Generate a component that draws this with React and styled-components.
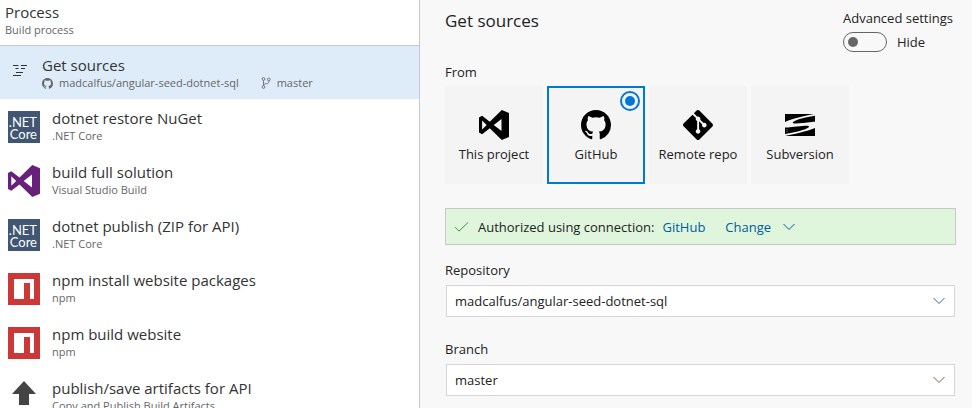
import React, { useState } from "react";
import styled, { createGlobalStyle } from "styled-components";
import { SiGit, SiSubversion } from "react-icons/si";

const GlobalStyle = createGlobalStyle`
  *, *::before, *::after { box-sizing: border-box; }
  body {
    margin: 0;
    color: #222;
    background: #f8f8f8;
    font-family: "Segoe UI", "Open Sans", "Noto Sans", sans-serif;
    font-size: 13px;
    line-height: 20px;
  }
  button, select, input { font: inherit; color: inherit; margin: 0; }
  svg { display: block; flex: none; }
`;

const Page = styled.div`
  display: grid;
  grid-template-columns: minmax(0, 420fr) minmax(0, 552fr);
  height: 100vh;
`;

const Sidebar = styled.nav`
  overflow: hidden;
  background: #fff;
  border-right: 1px solid #c8c8c8;
`;

const StepTitle = styled.span`
  display: block;
  font-size: 15px;
  line-height: 20px;
  color: #333;
`;

const StepCaption = styled.span`
  display: flex;
  align-items: center;
  font-size: 11px;
  line-height: 16px;
  color: #666;
`;

const ProcessHeader = styled.button`
  display: flex;
  flex-direction: column;
  width: 100%;
  height: 46px;
  padding: 2px 5px 0;
  border: 0;
  border-bottom: 1px solid #c8c8c8;
  background: none;
  text-align: left;
`;

const SourceStep = styled.button`
  display: flex;
  gap: 14px;
  width: 100%;
  height: 53px;
  padding: 9px 12px 0;
  border: 0;
  background: #deecf9;
  text-align: left;
`;

const SourceIcon = styled.span`
  padding-top: 8px;
`;

const SourceMeta = styled.span`
  display: flex;
  align-items: center;
  gap: 6px;
  margin-right: 22px;
`;

const StepList = styled.ul`
  margin: 0;
  padding: 1px 0 0;
  list-style: none;
`;

const StepButton = styled.button`
  display: flex;
  gap: 12px;
  width: 100%;
  height: 54px;
  padding: 8px 8px 0;
  border: 0;
  background: none;
  text-align: left;
`;

const StepIcon = styled.span`
  width: 32px;
  padding-top: 3px;
`;

const DotnetTile = styled.span`
  display: flex;
  flex-direction: column;
  align-items: flex-end;
  height: 32px;
  padding: 5px 3px 0 0;
  background: #405672;
  color: #fff;
  font-family: Lato, sans-serif;
  font-size: 13px;
  line-height: 12px;
`;

const Details = styled.main`
  padding: 9px 16px 0 25px;
  overflow: hidden;
`;

const DetailsHeader = styled.header`
  display: flex;
  justify-content: space-between;
  height: 53px;
`;

const Heading = styled.h1`
  margin: 0;
  font-size: 17px;
  line-height: 24px;
  font-weight: 400;
`;

const Advanced = styled.div`
  width: 113px;
  line-height: 18px;
`;

const ToggleRow = styled.label`
  display: flex;
  align-items: center;
  gap: 10px;
  padding-top: 5px;
`;

const Toggle = styled.input`
  appearance: none;
  display: flex;
  align-items: center;
  width: 44px;
  height: 20px;
  padding: 0 4px;
  border: 1px solid #666;
  border-radius: 10px;
  justify-content: ${(p) => (p.checked ? "flex-end" : "flex-start")};
  &::before {
    content: "";
    width: 10px;
    height: 10px;
    border-radius: 50%;
    background: #666;
  }
`;

const SourceGroup = styled.fieldset`
  margin: 0;
  padding: 0;
  border: 0;
  min-width: 0;
`;

const Legend = styled.legend`
  padding: 0 0 4px;
`;

const Tiles = styled.div`
  display: flex;
  flex-wrap: wrap;
  gap: 4px;
`;

const Tile = styled.label`
  position: relative;
  display: flex;
  flex-direction: column;
  align-items: center;
  gap: 4px;
  width: 98px;
  height: 98px;
  padding-top: 22px;
  background: #f4f4f4;
  border: 2px solid ${(p) => (p.$selected ? "#0078d7" : "#f4f4f4")};
  white-space: nowrap;
  svg { color: #000; }
`;

const TileRadio = styled.input`
  appearance: none;
  position: absolute;
  top: 3px;
  right: 3px;
  display: grid;
  place-items: center;
  width: 20px;
  height: 20px;
  border-radius: 50%;
  &:checked { border: 2px solid #0078d7; }
  &:checked::before {
    content: "";
    width: 10px;
    height: 10px;
    border-radius: 50%;
    background: #0078d7;
  }
`;

const Connection = styled.div`
  display: flex;
  align-items: center;
  height: 37px;
  margin-top: 24px;
  padding: 0 8px;
  border: 1px solid #c8c8c8;
  background: #dff6dd;
`;

const ConnectionText = styled.span`
  display: flex;
  gap: 8px;
  padding: 0 20px 0 9px;
`;

const ConnectionLink = styled.a`
  color: #005a9e;
  text-decoration: none;
`;

const ChangeButton = styled.button`
  display: flex;
  align-items: center;
  gap: 12px;
  padding: 0;
  border: 0;
  background: none;
  color: #005a9e;
`;

const Field = styled.div`
  padding-top: ${(p) => (p.$first ? "15px" : "22px")};
`;

const FieldLabel = styled.label`
  display: block;
  padding-bottom: 5px;
`;

const SelectBox = styled.div`
  display: grid;
  align-items: center;
  margin: 0 1px;
  & > * { grid-area: 1 / 1; }
  svg {
    justify-self: end;
    margin-right: 10px;
    pointer-events: none;
  }
`;

const Select = styled.select`
  appearance: none;
  width: 100%;
  height: 32px;
  padding: 0 32px 0 8px;
  border: 1px solid #d6d6d6;
  border-radius: 0;
  background: #fff;
`;

function Chevron({ color = "currentColor" }) {
  return (
    <svg width="12" height="8" viewBox="0 0 12 8" fill="none" stroke={color}>
      <path d="M.5 1 6 6.5 11.5 1" />
    </svg>
  );
}

function VisualStudio({ size, color }) {
  return (
    <svg width={size} height={size} viewBox="0 0 32 32" fill={color} fillRule="evenodd">
      <path d="M24.3 0 32 3.2V28.7L24.3 32 11.5 19.4 3.3 25.8 0 24V8L3.3 6.2 11.5 12.6ZM24 9.5 15.7 16 24 22.5ZM3.3 11.2V20.8L8.2 16Z" />
    </svg>
  );
}

function GitHub({ size }) {
  return (
    <svg width={size} height={size} viewBox="0 0 16 16" fill="currentColor">
      <path d="M8 0C3.58 0 0 3.58 0 8c0 3.54 2.29 6.53 5.47 7.59.4.07.55-.17.55-.38 0-.19-.01-.82-.01-1.49-2.01.37-2.53-.49-2.69-.94-.09-.23-.48-.94-.82-1.13-.28-.15-.68-.52-.01-.53.63-.01 1.08.58 1.23.82.72 1.21 1.87.87 2.33.66.07-.52.28-.87.51-1.07-1.78-.2-3.64-.89-3.64-3.95 0-.87.31-1.59.82-2.15-.08-.2-.36-1.02.08-2.12 0 0 .67-.21 2.2.82.64-.18 1.32-.27 2-.27s1.36.09 2 .27c1.53-1.04 2.2-.82 2.2-.82.44 1.1.16 1.92.08 2.12.51.56.82 1.27.82 2.15 0 3.07-1.87 3.75-3.65 3.95.29.25.54.73.54 1.48 0 1.07-.01 1.93-.01 2.2 0 .21.15.46.55.38A8.01 8.01 0 0 0 16 8c0-4.42-3.58-8-8-8Z" />
    </svg>
  );
}

function Branch() {
  return (
    <svg width="10" height="12" viewBox="0 0 10 12" fill="none" stroke="#777">
      <circle cx="2.5" cy="2" r="1.4" />
      <circle cx="2.5" cy="10" r="1.4" />
      <circle cx="7.8" cy="2.5" r="1.4" />
      <path d="M2.5 3.4v5.2M7.8 4v.6c0 1.7-1.2 1.9-2.6 2.1-1.5.2-2.7.5-2.7 1.9" />
    </svg>
  );
}

function Phases() {
  return (
    <svg width="16" height="14" viewBox="0 0 16 14" fill="none" stroke="#333">
      <path d="M1 2.5h5.5M9 2.5h6M3.5 5.5h3M9 5.5h4M4 9.5h7M1 12.5h8" />
    </svg>
  );
}

function Npm() {
  return (
    <svg width="32" height="32" viewBox="0 0 32 32">
      <path fill="#cb3837" d="M0 0h32v32H0z" />
      <path fill="#fff" d="M6 6h20v20h-4V10h-6v16H6z" />
    </svg>
  );
}

function UpArrow() {
  return (
    <svg width="32" height="32" viewBox="0 0 32 32" fill="#444">
      <path d="M16 0 28 13h-7v11H11V13H4z" />
    </svg>
  );
}

function Check() {
  return (
    <svg width="15" height="12" viewBox="0 0 15 12" fill="none" stroke="#4c8a3d">
      <path d="M1 6.2 5 10.2 14 1.5" />
    </svg>
  );
}

const icons = {
  dotnet: (
    <DotnetTile aria-hidden="true">
      <span>.NET</span>
      <span>Core</span>
    </DotnetTile>
  ),
  vs: <VisualStudio size={32} color="#68217a" />,
  npm: <Npm />,
  upload: <UpArrow />,
};

const steps = [
  { icon: "dotnet", title: "dotnet restore NuGet", caption: ".NET Core" },
  { icon: "vs", title: "build full solution", caption: "Visual Studio Build" },
  { icon: "dotnet", title: "dotnet publish (ZIP for API)", caption: ".NET Core" },
  { icon: "npm", title: "npm install website packages", caption: "npm" },
  { icon: "npm", title: "npm build website", caption: "npm" },
  { icon: "upload", title: "publish/save artifacts for API", caption: "Copy and Publish Build Artifacts" },
];

const sources = [
  { name: "This project", icon: <VisualStudio size={30} color="#000" /> },
  { name: "GitHub", icon: <GitHub size={30} /> },
  { name: "Remote repo", icon: <SiGit size={30} /> },
  { name: "Subversion", icon: <SiSubversion size={30} /> },
];

export default function App() {
  const [source, setSource] = useState("GitHub");
  const [advanced, setAdvanced] = useState(false);

  return (
    <>
      <GlobalStyle />
      <Page>
        <Sidebar>
          <ProcessHeader type="button">
            <StepTitle>Process</StepTitle>
            <StepCaption>Build process</StepCaption>
          </ProcessHeader>
          <SourceStep type="button">
            <SourceIcon><Phases /></SourceIcon>
            <span>
              <StepTitle>Get sources</StepTitle>
              <StepCaption>
                <SourceMeta><GitHub size={11} />madcalfus/angular-seed-dotnet-sql</SourceMeta>
                <SourceMeta><Branch />master</SourceMeta>
              </StepCaption>
            </span>
          </SourceStep>
          <StepList>
            {steps.map((step) => (
              <li key={step.title}>
                <StepButton type="button">
                  <StepIcon>{icons[step.icon]}</StepIcon>
                  <span>
                    <StepTitle>{step.title}</StepTitle>
                    <StepCaption>{step.caption}</StepCaption>
                  </span>
                </StepButton>
              </li>
            ))}
          </StepList>
        </Sidebar>
        <Details>
          <DetailsHeader>
            <Heading>Get sources</Heading>
            <Advanced>
              <div id="advanced-label">Advanced settings</div>
              <ToggleRow>
                <Toggle
                  type="checkbox"
                  role="switch"
                  aria-labelledby="advanced-label"
                  checked={advanced}
                  onChange={(e) => setAdvanced(e.target.checked)}
                />
                {advanced ? "Show" : "Hide"}
              </ToggleRow>
            </Advanced>
          </DetailsHeader>
          <SourceGroup>
            <Legend>From</Legend>
            <Tiles>
              {sources.map(({ name, icon }) => (
                <Tile key={name} $selected={source === name}>
                  <TileRadio
                    type="radio"
                    name="source"
                    value={name}
                    checked={source === name}
                    onChange={() => setSource(name)}
                  />
                  {icon}
                  {name}
                </Tile>
              ))}
            </Tiles>
          </SourceGroup>
          <Connection>
            <Check />
            <ConnectionText>
              Authorized using connection:
              <ConnectionLink href="#github">GitHub</ConnectionLink>
            </ConnectionText>
            <ChangeButton type="button">Change<Chevron /></ChangeButton>
          </Connection>
          <Field $first>
            <FieldLabel htmlFor="repository">Repository</FieldLabel>
            <SelectBox>
              <Select id="repository">
                <option>madcalfus/angular-seed-dotnet-sql</option>
              </Select>
              <Chevron color="#31679a" />
            </SelectBox>
          </Field>
          <Field>
            <FieldLabel htmlFor="branch">Branch</FieldLabel>
            <SelectBox>
              <Select id="branch">
                <option>master</option>
              </Select>
              <Chevron color="#8a5a3c" />
            </SelectBox>
          </Field>
        </Details>
      </Page>
    </>
  );
}
